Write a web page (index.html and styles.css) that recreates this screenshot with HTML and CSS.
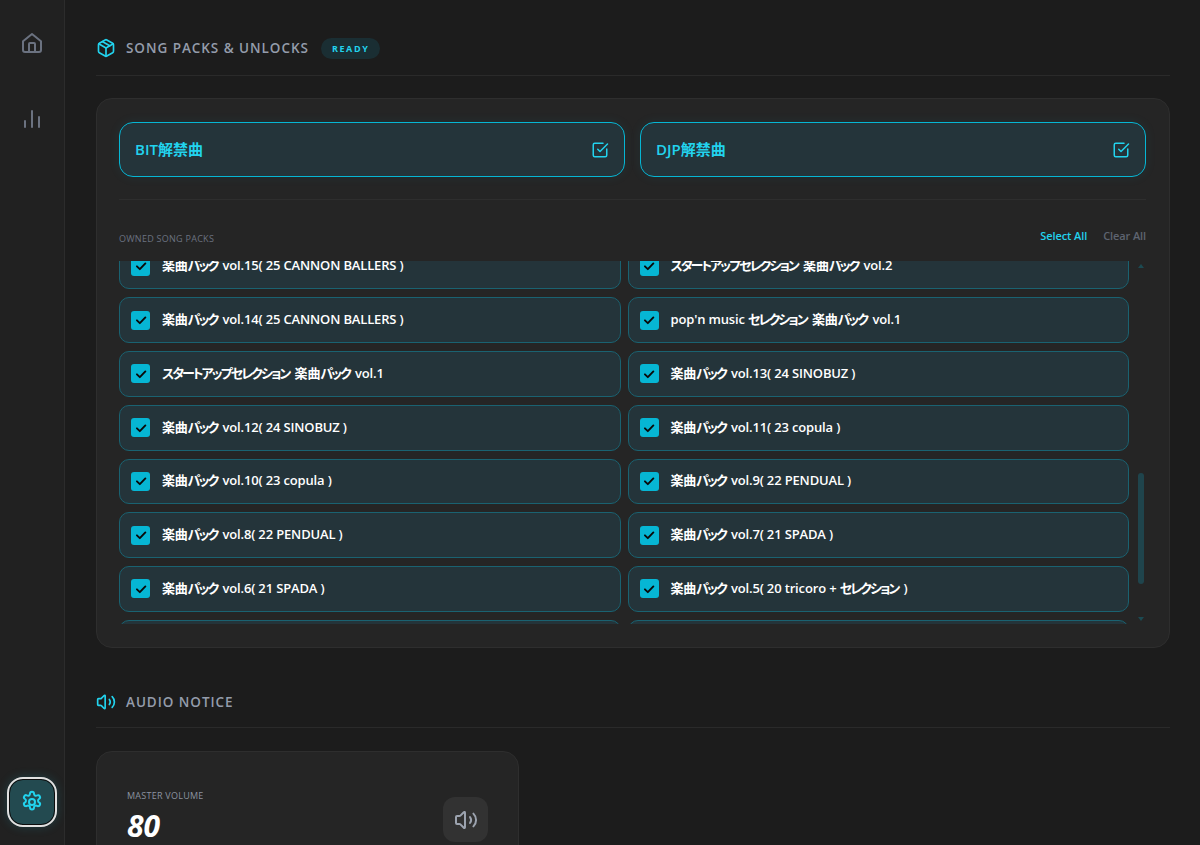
FILE: index.html
```html
<!DOCTYPE html>
<html lang="ja">
<head>
<meta charset="utf-8">
<title>Song Packs</title>
<link rel="stylesheet" href="styles.css">
</head>
<body>
<div class="app">
  <nav class="sidebar">
    <a class="nav-btn nav-home"><svg class="ico24" viewBox="0 0 24 24"><path d="M3 10.2 12 3l9 7.2V19a2 2 0 0 1-2 2H5a2 2 0 0 1-2-2z"/><path d="M9 21v-8a1 1 0 0 1 1-1h4a1 1 0 0 1 1 1v8"/></svg></a>
    <a class="nav-btn nav-stats"><svg class="ico24" viewBox="0 0 24 24"><path d="M12 20V4"/><path d="M19 20V10"/><path d="M5 20v-6"/></svg></a>
    <a class="nav-btn nav-active"><svg class="ico24" viewBox="0 0 24 24"><path d="M10 3.8a2 2 0 0 1 4 0 2 2 0 0 0 3 1.7 2 2 0 0 1 2 3.5 2 2 0 0 0 0 3.4 2 2 0 0 1-2 3.5 2 2 0 0 0-3 1.7 2 2 0 0 1-4 0 2 2 0 0 0-3-1.7 2 2 0 0 1-2-3.5 2 2 0 0 0 0-3.4 2 2 0 0 1 2-3.5 2 2 0 0 0 3-1.7z"/><circle cx="12" cy="12" r="3"/></svg></a>
  </nav>
  <main class="main">
    <header class="sec-head">
      <svg class="ico20" viewBox="0 0 24 24"><path d="M21 8a2 2 0 0 0-1-1.7l-7-4a2 2 0 0 0-2 0l-7 4A2 2 0 0 0 3 8v8a2 2 0 0 0 1 1.7l7 4a2 2 0 0 0 2 0l7-4a2 2 0 0 0 1-1.7z"/><path d="M3.3 7 12 12l8.7-5"/><path d="M12 22V12"/><path d="m7.5 4.3 9 5.1"/></svg>
      <h2 class="sec-title">SONG PACKS &amp; UNLOCKS</h2>
      <span class="badge">READY</span>
    </header>
    <section class="card">
      <div class="toggles">
        <div class="toggle"><span>BIT解禁曲</span><svg class="ico18" viewBox="0 0 24 24"><path d="M21 10.7V19a2 2 0 0 1-2 2H5a2 2 0 0 1-2-2V5a2 2 0 0 1 2-2h11"/><path d="m9 11 3 3L22 4"/></svg></div>
        <div class="toggle"><span>DJP解禁曲</span><svg class="ico18" viewBox="0 0 24 24"><path d="M21 10.7V19a2 2 0 0 1-2 2H5a2 2 0 0 1-2-2V5a2 2 0 0 1 2-2h11"/><path d="m9 11 3 3L22 4"/></svg></div>
      </div>
      <div class="divider"></div>
      <div class="owned-head">
        <span class="owned-label">OWNED SONG PACKS</span>
        <div class="owned-actions"><span class="sel">Select All</span><span class="clr">Clear All</span></div>
      </div>
      <div class="list-wrap">
        <div class="list-view">
          <div class="list">
            <div class="item"><span class="cb"><svg viewBox="0 0 24 24"><path d="M5 12.5 10 17.5 19.5 7.5"/></svg></span><p class="name">楽曲<b class="kana">パック</b> vol.15( 25 CANNON BALLERS )</p></div>
            <div class="item"><span class="cb"><svg viewBox="0 0 24 24"><path d="M5 12.5 10 17.5 19.5 7.5"/></svg></span><p class="name"><b class="kana">スタートアップセレクション</b> 楽曲<b class="kana">パック</b> vol.2</p></div>
            <div class="item"><span class="cb"><svg viewBox="0 0 24 24"><path d="M5 12.5 10 17.5 19.5 7.5"/></svg></span><p class="name">楽曲<b class="kana">パック</b> vol.14( 25 CANNON BALLERS )</p></div>
            <div class="item"><span class="cb"><svg viewBox="0 0 24 24"><path d="M5 12.5 10 17.5 19.5 7.5"/></svg></span><p class="name">pop'n music <b class="kana">セレクション</b> 楽曲<b class="kana">パック</b> vol.1</p></div>
            <div class="item"><span class="cb"><svg viewBox="0 0 24 24"><path d="M5 12.5 10 17.5 19.5 7.5"/></svg></span><p class="name"><b class="kana">スタートアップセレクション</b> 楽曲<b class="kana">パック</b> vol.1</p></div>
            <div class="item"><span class="cb"><svg viewBox="0 0 24 24"><path d="M5 12.5 10 17.5 19.5 7.5"/></svg></span><p class="name">楽曲<b class="kana">パック</b> vol.13( 24 SINOBUZ )</p></div>
            <div class="item"><span class="cb"><svg viewBox="0 0 24 24"><path d="M5 12.5 10 17.5 19.5 7.5"/></svg></span><p class="name">楽曲<b class="kana">パック</b> vol.12( 24 SINOBUZ )</p></div>
            <div class="item"><span class="cb"><svg viewBox="0 0 24 24"><path d="M5 12.5 10 17.5 19.5 7.5"/></svg></span><p class="name">楽曲<b class="kana">パック</b> vol.11( 23 copula )</p></div>
            <div class="item"><span class="cb"><svg viewBox="0 0 24 24"><path d="M5 12.5 10 17.5 19.5 7.5"/></svg></span><p class="name">楽曲<b class="kana">パック</b> vol.10( 23 copula )</p></div>
            <div class="item"><span class="cb"><svg viewBox="0 0 24 24"><path d="M5 12.5 10 17.5 19.5 7.5"/></svg></span><p class="name">楽曲<b class="kana">パック</b> vol.9( 22 PENDUAL )</p></div>
            <div class="item"><span class="cb"><svg viewBox="0 0 24 24"><path d="M5 12.5 10 17.5 19.5 7.5"/></svg></span><p class="name">楽曲<b class="kana">パック</b> vol.8( 22 PENDUAL )</p></div>
            <div class="item"><span class="cb"><svg viewBox="0 0 24 24"><path d="M5 12.5 10 17.5 19.5 7.5"/></svg></span><p class="name">楽曲<b class="kana">パック</b> vol.7( 21 SPADA )</p></div>
            <div class="item"><span class="cb"><svg viewBox="0 0 24 24"><path d="M5 12.5 10 17.5 19.5 7.5"/></svg></span><p class="name">楽曲<b class="kana">パック</b> vol.6( 21 SPADA )</p></div>
            <div class="item"><span class="cb"><svg viewBox="0 0 24 24"><path d="M5 12.5 10 17.5 19.5 7.5"/></svg></span><p class="name">楽曲<b class="kana">パック</b> vol.5( 20 tricoro + <b class="kana">セレクション</b> )</p></div>
            <div class="item"></div>
            <div class="item"></div>
          </div>
        </div>
        <div class="scrollbar">
          <span class="arrow-up"></span>
          <span class="thumb"></span>
          <span class="arrow-down"></span>
        </div>
      </div>
    </section>
    <header class="sec-head sec-audio">
      <svg class="ico20" viewBox="0 0 24 24"><path d="M11 4.7a.7.7 0 0 0-1.200-.5L6.400 7.600A1.400 1.400 0 0 1 5.400 8H3a1 1 0 0 0-1 1v6a1 1 0 0 0 1 1h2.400a1.400 1.400 0 0 1 1 .4l3.400 3.400a.7.7 0 0 0 1.200-.5z"/><path d="M16 9a5 5 0 0 1 0 6"/><path d="M19.400 18.400a9 9 0 0 0 0-12.800"/></svg>
      <h2 class="sec-title">AUDIO NOTICE</h2>
    </header>
    <section class="vol-card">
      <div class="vol-text">
        <div class="vol-label">MASTER VOLUME</div>
        <div class="vol-value">80</div>
      </div>
      <div class="vol-btn"><svg class="ico24" viewBox="0 0 24 24"><path d="M11 4.700a.7.7 0 0 0-1.200-.5L6.400 7.600A1.400 1.400 0 0 1 5.400 8H3a1 1 0 0 0-1 1v6a1 1 0 0 0 1 1h2.400a1.400 1.400 0 0 1 1 .4l3.400 3.400a.7.7 0 0 0 1.200-.5z"/><path d="M16 9a5 5 0 0 1 0 6"/><path d="M19.400 18.400a9 9 0 0 0 0-12.800"/></svg></div>
    </section>
  </main>
</div>
</body>
</html>
```
FILE: styles.css
```css
* { box-sizing: border-box; }
html, body { margin: 0; height: 845px; overflow: hidden; background: #1c1c1c; }
body { font-family: "Open Sans", "Noto Sans CJK JP", sans-serif; font-feature-settings: "palt"; color: #fff; }
svg { fill: none; stroke: currentColor; stroke-width: 2; stroke-linecap: round; stroke-linejoin: round; flex: none; }
.ico24 { width: 24px; height: 24px; }
.ico20 { width: 20px; height: 20px; color: #22d3ee; }
.ico18 { width: 18px; height: 18px; color: #22d3ee; }
.app { display: flex; height: 845px; }
.sidebar { width: 65px; flex: none; background: #212121; border-right: 1px solid #2c2c2c; display: flex; flex-direction: column; align-items: center; padding: 19px 0 20px 0; }
.nav-btn { width: 48px; height: 48px; border-radius: 14px; display: flex; align-items: center; justify-content: center; color: #6b7280; }
.nav-stats { margin-top: 28px; }
.nav-active { width: 46px; height: 46px; margin-top: auto; background: #234a50; color: #22d3ee; outline: 2px solid #e0e0e0; border: 1px solid #0c0c0c; box-shadow: 0 0 12px rgba(34, 211, 238, .25); }
.main { flex: 1; min-width: 0; padding: 38px 30px 0 31px; display: flex; flex-direction: column; }
.sec-head { display: flex; align-items: center; height: 38px; padding-bottom: 17px; border-bottom: 1px solid #2a2a2a; margin-bottom: 22px; gap: 10px; flex: none; }
.sec-title { margin: 0; font-size: 13.5px; font-weight: 600; letter-spacing: .95px; color: #949cab; line-height: 20px; }
.badge { height: 21px; padding: 0 11px; margin-left: 2px; border-radius: 11px; background: #1a2e33; color: #22d3ee; font-size: 9px; font-weight: 700; letter-spacing: 1.6px; display: flex; align-items: center; }
.card { height: 550px; flex: none; border-radius: 16px; background: #252525; border: 1px solid #2e2e2e; padding: 23px 23px 0 22px; display: flex; flex-direction: column; }
.toggles { display: flex; gap: 15px; flex: none; }
.toggle { flex: 1; height: 55px; border: 1px solid #06b6d4; border-radius: 14px; background: #24343a; color: #22d3ee; padding: 0 15px; display: flex; justify-content: space-between; align-items: center; font-size: 15px; font-weight: 600; box-shadow: 0 0 12px rgba(6, 182, 212, .08); }
.toggle span { line-height: 20px; margin-top: -2px; }
.divider { height: 1px; background: #2e2e2e; margin-top: 22px; flex: none; }
.owned-head { display: flex; justify-content: space-between; align-items: center; height: 61px; padding-top: 11px; flex: none; }
.owned-label { font-size: 9px; font-weight: 500; letter-spacing: .27px; color: #6b7280; margin-top: 4px; }
.owned-actions { display: flex; gap: 16px; font-size: 11px; font-weight: 600; letter-spacing: -.1px; margin-top: -1px; }
.sel { color: #22d3ee; }
.clr { color: #5e6470; }
.list-wrap { display: flex; height: 363px; gap: 9px; flex: none; }
.list-view { width: 1010px; flex: none; overflow: hidden; }
.list { display: grid; grid-template-columns: 1fr 1fr; column-gap: 7px; row-gap: 8px; margin-top: -17.45px; }
.item { height: 45.75px; border: 1px solid #1a6271; border-radius: 10px; background: #24343a; display: flex; align-items: center; gap: 12px; padding: 0 11px; font-size: 13px; font-weight: 600; color: #fff; white-space: nowrap; }
.name { margin: -3px 0 0; letter-spacing: -.15px; }
.kana { font-weight: inherit; letter-spacing: -2px; margin-right: 2px; }
.cb { width: 19px; height: 19px; border-radius: 3px; background: #06b6d4; display: flex; align-items: center; justify-content: center; color: #0a0a0a; flex: none; }
.cb svg { width: 14px; height: 14px; stroke-width: 3.2; }
.scrollbar { width: 6px; display: flex; flex-direction: column; align-items: center; flex: none; }
.arrow-up { width: 0; height: 0; border: 3px solid transparent; border-top: 0; border-bottom: 4px solid #1c4a52; margin-top: 3px; }
.thumb { width: 6px; height: 111px; border-radius: 3px; background: #1f444c; margin-top: 205px; }
.arrow-down { width: 0; height: 0; border: 3px solid transparent; border-bottom: 0; border-top: 4px solid #1c4a52; margin-top: 33px; }
.sec-audio { margin-top: 44px; height: 36px; padding-bottom: 15px; margin-bottom: 23px; }
.vol-card { width: 423px; height: 120px; flex: none; border-radius: 16px; background: #252525; border: 1px solid #2e2e2e; padding: 37px 30px 0 30px; display: flex; justify-content: space-between; align-items: flex-start; }
.vol-label { font-size: 9px; font-weight: 500; letter-spacing: .25px; color: #8b93a0; line-height: 14px; }
.vol-value { font-size: 30px; font-weight: 700; font-style: italic; line-height: 34px; margin-top: 6px; color: #fff; }
.vol-btn { width: 45px; height: 45px; border-radius: 12px; background: #323232; color: #9ca3af; display: flex; align-items: center; justify-content: center; margin-top: 8px; }
```
